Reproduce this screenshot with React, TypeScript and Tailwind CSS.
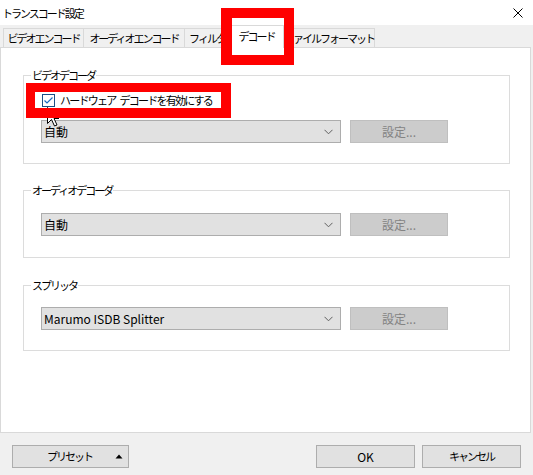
import type { ReactNode } from "react";

const tabs = [
  { label: "ビデオエンコード", width: "w-[81px]" },
  { label: "オーディオエンコード", width: "w-[102px]" },
  { label: "フィルタ", width: "w-[46px]" },
  { label: "デコード", width: "w-[55px]", selected: true },
  { label: "ファイルフォーマット", width: "w-[92px]" },
];

function Chevron() {
  return (
    <svg width="9" height="6" viewBox="0 0 9 6" fill="none" stroke="#606060" strokeWidth="1">
      <path d="M0.5 0.8L4.5 4.8L8.5 0.8" />
    </svg>
  );
}

function Combo({ value }: { value: string }) {
  return (
    <div className="flex items-center pl-[17px]">
      <div className="flex h-[23px] w-[300px] items-center justify-between border border-[#adadad] bg-[#e1e1e1] pl-[2px] pr-[7px]">
        <span>{value}</span>
        <Chevron />
      </div>
      <div className="ml-[9px] flex h-[23px] w-[98px] items-center justify-center border border-[#bfbfbf] bg-[#cccccc] text-[#838383]">
        設定...
      </div>
    </div>
  );
}

function Group({ title, className, children }: { title: string; className: string; children: ReactNode }) {
  return (
    <fieldset className={`w-[487px] border border-[#dcdcdc] ${className}`}>
      <legend className="ml-[7px] px-[1px] text-[11px] leading-[16px] tracking-[-2px]">{title}</legend>
      {children}
    </fieldset>
  );
}

export default function App() {
  return (
    <div className="relative h-[475px] w-[533px] overflow-hidden bg-[#f0f0f0] font-['Noto_Sans_CJK_JP','Noto_Sans',sans-serif] text-[12px] text-black">
      {/* title bar */}
      <div className="flex h-[25px] items-center justify-between bg-white pl-[2px] pr-[10px]">
        <span className="text-[11px] leading-[16px] tracking-[-2px]">トランスコード設定</span>
        <svg width="10" height="10" viewBox="0 0 10 10" stroke="#000" strokeWidth="1">
          <path d="M0.5 0.5L9.5 9.5M9.5 0.5L0.5 9.5" />
        </svg>
      </div>

      {/* tabs */}
      <div className="relative z-10 flex h-[22px] items-start pl-[3px]">
        {tabs.map((tab, i) => (
          <div
            key={tab.label}
            className={`flex items-center justify-center whitespace-nowrap border border-b-0 border-[#d9d9d9] text-[11px] leading-[16px] tracking-[-2px] ${tab.width} ${
              i > 0 ? "-ml-px" : ""
            } ${tab.selected ? "h-[23px] bg-white pb-[3px]" : "mt-[3px] h-[19px] bg-[#f0f0f0]"}`}
          >
            {tab.label}
          </div>
        ))}
      </div>

      {/* panel */}
      <div className="h-[386px] w-[531px] border border-[#d9d9d9] bg-white pl-[22px] pt-[19px]">
        <Group title="ビデオデコーダ" className="pb-[20px]">
          <div className="mt-[9px] flex items-center pl-[18px]">
            <div className="flex h-[13px] w-[13px] items-center justify-center border border-[#1c4f86] bg-white">
              <svg width="11" height="11" viewBox="0 0 11 11" fill="none" stroke="#1b6ac2" strokeWidth="1.2">
                <path d="M1.5 5.5L4 8L9.5 2.5" />
              </svg>
            </div>
            <span className="ml-[5px] text-[11px] leading-[16px] tracking-[-1.75px]">
              ハードウェア<span className="ml-[4px]">デコードを有効にする</span>
            </span>
          </div>
          <div className="mt-[12px]">
            <Combo value="自動" />
          </div>
        </Group>

        <Group title="オーディオデコーダ" className="mt-[18px] pb-[21px]">
          <div className="mt-[15px]">
            <Combo value="自動" />
          </div>
        </Group>

        <Group title="スプリッタ" className="mt-[19px] pb-[20px]">
          <div className="mt-[14px]">
            <Combo value="Marumo ISDB Splitter" />
          </div>
        </Group>
      </div>

      {/* bottom buttons */}
      <div className="flex pl-[12px] pr-[12px] pt-[12px]">
        <div className="relative flex h-[23px] w-[117px] items-center justify-center border border-[#adadad] bg-[#e1e1e1] pr-[2px]">
          <span className="text-[11px] tracking-[-2px]">プリセット</span>
          <svg className="absolute right-[5px] top-[8px]" width="8" height="5" viewBox="0 0 8 5" fill="#000">
            <path d="M0.5 4.5L4 0.5L7.5 4.5Z" />
          </svg>
        </div>
        <div className="ml-auto flex h-[23px] w-[99px] items-center justify-center border border-[#adadad] bg-[#e1e1e1]">
          OK
        </div>
        <div className="ml-[7px] flex h-[23px] w-[99px] items-center justify-center border border-[#adadad] bg-[#e1e1e1] text-[11px] tracking-[-2px]">
          キャンセル
        </div>
      </div>

      {/* mouse cursor */}
      <svg className="absolute left-[47px] top-[107px] z-20" width="13" height="20" viewBox="0 0 13 20">
        <path d="M0.5 0.5L0.5 16.5L4.5 12.5L7.5 19L10 18L7 11.5L12 11.5Z" fill="#fff" stroke="#000" strokeWidth="1" />
      </svg>

      {/* red highlight boxes */}
      <div className="absolute left-[221px] top-[8px] z-30 h-[57px] w-[73px] border-[10px] border-l-[11px] border-[#ff0000]" />
      <div className="absolute left-[26px] top-[83px] z-30 h-[35px] w-[205px] border-b-[10px] border-l-[9px] border-r-[10px] border-t-[9px] border-[#ff0000]" />
    </div>
  );
}
